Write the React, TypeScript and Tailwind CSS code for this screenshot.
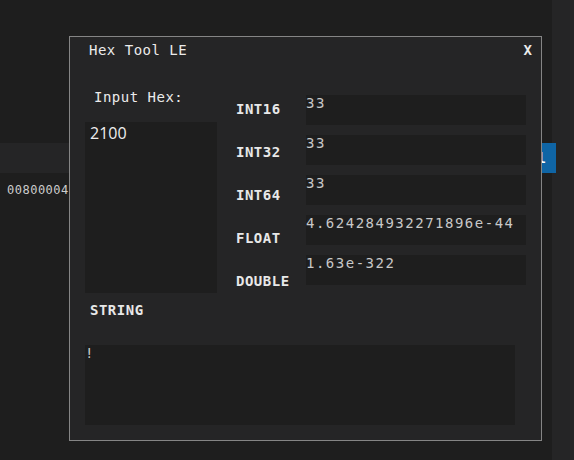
import React from "react";

const mono = { fontFamily: '"DejaVu Sans Mono", "Liberation Mono", monospace' };

export default function App() {
  const labels = ["INT16", "INT32", "INT64", "FLOAT", "DOUBLE"];
  const values = ["33", "33", "33", "4.624284932271896e-44", "1.63e-322"];
  return (
    <div className="relative w-[574px] h-[460px] overflow-hidden bg-[#1e1e1e] flex">
      {/* page behind the dialog */}
      <div className="w-[552px] flex flex-col">
        <div className="mt-[143px] h-[30px] bg-[#252526] flex justify-end">
          <div
            className="relative z-0 -mr-[4px] w-[80px] h-[30px] bg-[#0f65a5] flex items-center justify-end pr-[10px] overflow-hidden text-[14px] font-bold text-white leading-4"
            style={mono}
          >
            Cancel
          </div>
        </div>
        <div className="mt-[9px] pl-[7px] text-[12px] leading-4 tracking-[0.5px] text-[#cccccc]" style={mono}>
          00800004
        </div>
      </div>
      <div className="flex-1 bg-[#252526]" />

      {/* dialog */}
      <div
        className="absolute z-10 left-[69px] top-[36px] w-[473px] h-[405px] border border-[#858585] bg-[#252526] flex flex-col"
        style={mono}
      >
        <div className="mt-[5px] flex justify-between pl-[19px] pr-[9px] text-[14px] leading-4 text-[#ebebeb]">
          <span className="tracking-[0.5px]">Hex Tool LE</span>
          <span className="font-bold">X</span>
        </div>

        <div className="mt-[31px] pl-[15px] flex items-start">
          <div className="flex flex-col w-[132px]">
            <div className="ml-[9px] text-[14px] leading-4 tracking-[0.5px] text-[#ebebeb]">Input Hex:</div>
            <div className="mt-[17px] h-[171px] bg-[#1e1e1e] pl-[5px]">
              <span
                className="text-[16px] leading-5 text-[#eeeeee]"
                style={{ fontFamily: '"Open Sans", "Noto Sans", sans-serif' }}
              >
                2100
              </span>
            </div>
          </div>
          <div className="ml-[19px] mt-[12px] w-[70px] flex flex-col">
            {labels.map((l) => (
              <div key={l} className="h-[43px] text-[14px] leading-4 font-bold tracking-[0.5px] text-[#e8e8e8]">
                {l}
              </div>
            ))}
          </div>
          <div className="mt-[6px] w-[220px] flex flex-col gap-[10px]">
            {values.map((v, i) => (
              <div
                key={i}
                className="h-[30px] bg-[#1e1e1e] text-[14px] leading-4 tracking-[1.5px] text-[#c8c8c8]"
              >
                {v}
              </div>
            ))}
          </div>
        </div>

        <div className="-mt-[14px] pl-[20px] text-[14px] leading-4 font-bold tracking-[0.5px] text-[#e8e8e8]">
          STRING
        </div>
        <div className="mt-[27px] ml-[15px] w-[430px] h-[80px] bg-[#1e1e1e] text-[14px] leading-4 tracking-[1.5px] text-[#c8c8c8]">
          !
        </div>
      </div>
    </div>
  );
}
